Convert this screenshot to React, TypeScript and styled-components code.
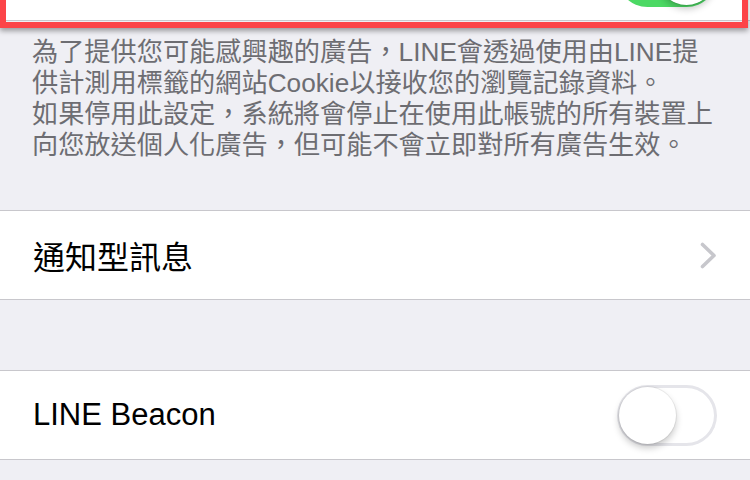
import React from 'react'
import styled, { createGlobalStyle } from 'styled-components'

const GlobalStyle = createGlobalStyle`
  html, body {
    margin: 0;
    padding: 0;
    background: #efeff4;
  }
`

const footnoteLines = [
  '為了提供您可能感興趣的廣告，LINE會透過使用由LINE提',
  '供計測用標籤的網站Cookie以接收您的瀏覽記錄資料。',
  '如果停用此設定，系統將會停止在使用此帳號的所有裝置上',
  '向您放送個人化廣告，但可能不會立即對所有廣告生效。',
]

const Toggle: React.FC<{ on?: boolean }> = ({ on = false }) => (
  <Track on={on}>
    <Knob on={on} />
  </Track>
)

const Chevron: React.FC = () => (
  <svg width="17" height="27" viewBox="0 0 17 27">
    <polyline
      points="2.5,2.5 14,13.5 2.5,24.5"
      fill="none"
      stroke="#c7c7cc"
      strokeWidth="3.6"
      strokeLinecap="round"
      strokeLinejoin="round"
    />
  </svg>
)

const App: React.FC = () => {
  return (
    <Screen>
      <GlobalStyle />

      {/* row scrolled mostly out of view, only its switch shows */}
      <HighlightWrap>
        <Cell>
          <span />
          <Toggle on />
        </Cell>
        <HighlightFrame />
      </HighlightWrap>

      <Footnote>
        {footnoteLines.map(line => (
          <FootLine key={line}>{line}</FootLine>
        ))}
      </Footnote>

      <Gap h={49} />
      <Cell topBorder>
        <Label size={32}>通知型訊息</Label>
        <Chevron />
      </Cell>

      <Gap h={70} />
      <Cell topBorder>
        <Label size={31}>LINE Beacon</Label>
        <Toggle />
      </Cell>
    </Screen>
  )
}

const Screen = styled.div`
  height: 480px;
  overflow: hidden;
  background: #efeff4;
  font-family: "Liberation Sans", "Noto Sans CJK TC", sans-serif;
`

const HighlightWrap = styled.div`
  position: relative;
  margin-top: -68px;
`

const HighlightFrame = styled.div`
  position: absolute;
  top: -6px;
  left: 0;
  right: 2px;
  bottom: -7px;
  border: 6px solid #fc4448;
  box-shadow: 0 3px 5px rgba(0, 0, 0, 0.35);
  pointer-events: none;
`

const Cell = styled.div<{ topBorder?: boolean }>`
  display: flex;
  align-items: center;
  justify-content: space-between;
  height: 88px;
  padding: 0 33px;
  background: #ffffff;
  border-bottom: 1px solid #c8c7cc;
  border-top: ${props => props.topBorder ? '1px solid #c8c7cc' : 'none'};
`

const Label = styled.div<{ size: number }>`
  font-size: ${props => props.size}px;
  color: #000000;
  white-space: nowrap;
`

const Footnote = styled.div`
  padding: 16px 0 0 32px;
  font-size: 26.2px;
  line-height: 31px;
  color: #6d6d72;
`

const FootLine = styled.div`
  white-space: nowrap;
`

const Gap = styled.div<{ h: number }>`
  height: ${props => props.h}px;
`

const Track = styled.div<{ on: boolean }>`
  position: relative;
  box-sizing: border-box;
  width: 100px;
  height: 61px;
  border-radius: 31px;
  background: ${props => props.on ? '#4cd964' : '#ffffff'};
  box-shadow: ${props => props.on ? 'none' : 'inset 0 0 0 3px #e5e5ea'};
  flex-shrink: 0;
`

const Knob = styled.div<{ on: boolean }>`
  position: absolute;
  top: 2px;
  left: ${props => props.on ? '41px' : '2px'};
  width: 57px;
  height: 57px;
  border-radius: 50%;
  background: #ffffff;
  box-shadow: 0 4px 7px rgba(0, 0, 0, 0.22), 0 0 0 1px rgba(0, 0, 0, 0.06);
`

export default App
